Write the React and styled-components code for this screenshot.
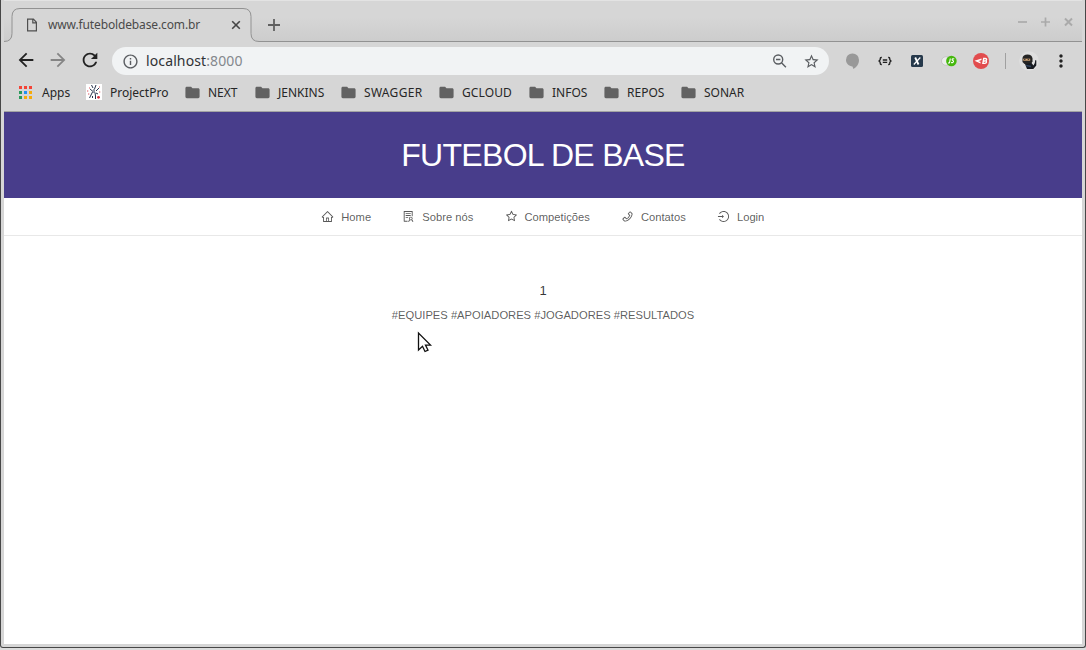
import React from 'react';
import styled, { createGlobalStyle } from 'styled-components';
import {
  AiOutlineHome,
  AiOutlineSolution,
  AiOutlineStar,
  AiOutlinePhone,
  AiOutlineLogin,
} from 'react-icons/ai';
import {
  MdArrowBack,
  MdArrowForward,
  MdRefresh,
  MdInfoOutline,
  MdStarBorder,
  MdMoreVert,
  MdFolder,
} from 'react-icons/md';

const GlobalStyle = createGlobalStyle`
  * { box-sizing: border-box; }
  body { margin: 0; background: #d6d6d6; overflow: hidden; }
  svg { display: block; flex: none; }
`;

const Desktop = styled.div`
  width: 1086px;
  height: 650px;
  background: #dcdcdc;
`;

const Window = styled.div`
  position: relative;
  display: flex;
  flex-direction: column;
  height: 648px;
  padding: 0 3px 3px;
  border: solid #474747;
  border-width: 0 1px 1px;
  border-radius: 0 0 3px 3px;
  background: #d6d6d6;
  font-family: 'Noto Sans', sans-serif;
`;

const TabStrip = styled.div`
  display: flex;
  position: relative;
  height: 42px;
  border-top: 1px solid #e3e3e3;
  background: linear-gradient(#d6d6d6 40%, #cccccc);
`;

const TabOutline = styled.svg`
  position: absolute;
  left: 0;
  top: 0;
`;

const Tab = styled.div`
  position: relative;
  display: flex;
  align-items: center;
  width: 239px;
  height: 34px;
  margin: 7px 0 0 8px;
  padding: 0 10px 0 13px;
  color: #4a4a4a;
  font-size: 12px;
  letter-spacing: -0.13px;
`;

const TabTitle = styled.span`
  flex: 1;
  margin-left: 9px;
  line-height: 16px;
`;

const NewTab = styled.div`
  position: relative;
  margin: 18px 0 0 17px;
`;

const WindowButtons = styled.div`
  position: relative;
  display: flex;
  gap: 14px;
  margin: 16px 9px 0 auto;
`;

const Toolbar = styled.div`
  display: flex;
  align-items: center;
  height: 38px;
  padding-left: 11px;
`;

const NavButtons = styled.div`
  display: flex;
  flex: none;
  gap: 10px;
  width: 97px;
  margin-bottom: 2px;
`;

const AddressBar = styled.div`
  display: flex;
  flex: none;
  align-items: center;
  width: 717px;
  height: 28px;
  padding: 0 9.5px;
  border-radius: 14px;
  background: #f1f3f4;
  color: #5a5d61;
`;

const Url = styled.span`
  flex: 1;
  margin-left: 7.5px;
  color: #303235;
  font-size: 14px;
  line-height: 20px;
  letter-spacing: 0.12px;
`;

const Port = styled.span`
  color: #84888d;
`;

const AddressActions = styled.div`
  display: flex;
  align-items: center;
  gap: 15px;
`;

const Extensions = styled.div`
  display: flex;
  flex: none;
  align-items: center;
  gap: 16px;
  margin-left: 16px;
`;

const Separator = styled.div`
  flex: none;
  width: 1px;
  height: 16px;
  margin: 0 13px 0 16px;
  background: #a0a0a0;
`;

const Menu = styled.div`
  margin: 0 0 1px 11.5px;
`;

const Bookmarks = styled.div`
  display: flex;
  align-items: center;
  height: 32px;
  padding: 0 0 7px 14px;
  border-bottom: 1px solid #a3a3a3;
  color: #262626;
  font-size: 12px;
`;

const Bookmark = styled.div`
  display: flex;
  align-items: center;
  gap: ${(p) => p.$gap}px;
  width: ${(p) => p.$width}px;
  white-space: nowrap;
  letter-spacing: ${(p) => p.$tracking || 0}px;
`;

const Page = styled.main`
  flex: 1;
  background: #fff;
  color: rgba(0, 0, 0, 0.65);
  font-family: 'Liberation Sans', Arial, sans-serif;
  font-size: 11.2px;
`;

const Banner = styled.h1`
  display: flex;
  align-items: center;
  justify-content: center;
  height: 86px;
  margin: 0;
  background: #483d8b;
  color: #fff;
  font-size: 32px;
  font-weight: 400;
  letter-spacing: -0.7px;
`;

const SiteNav = styled.nav`
  display: flex;
  justify-content: center;
  gap: 31.2px;
  height: 38px;
  padding-right: 0.4px;
  border-bottom: 1px solid #e8e8e8;
`;

const NavItem = styled.a`
  display: flex;
  align-items: center;
  gap: 7px;
`;

const NavLabel = styled.span`
  padding-top: 2px;
  line-height: 17px;
`;

const Content = styled.section`
  padding-top: 45px;
  text-align: center;
`;

const Count = styled.div`
  color: rgba(0, 0, 0, 0.78);
  font-size: 13px;
  line-height: 20px;
`;

const Tags = styled.div`
  margin-top: 6px;
  line-height: 17px;
`;

const Cursor = styled.svg`
  position: absolute;
  left: 415px;
  top: 331px;
`;

const folders = [
  ['NEXT', 70],
  ['JENKINS', 86],
  ['SWAGGER', 98, 0.3],
  ['GCLOUD', 90, 0.1],
  ['INFOS', 75],
  ['REPOS', 77],
  ['SONAR', 80],
];

const pages = [
  ['Home', AiOutlineHome],
  ['Sobre nós', AiOutlineSolution],
  ['Competições', AiOutlineStar],
  ['Contatos', AiOutlinePhone],
  ['Login', AiOutlineLogin],
];

const appColors = [
  '#f44336', '#f44336', '#f44336',
  '#2a9a5b', '#2490f0', '#f6ab09',
  '#2a9a5b', '#f6ab09', '#f6ab09',
];

function AppsIcon() {
  return (
    <svg width="14" height="14" shapeRendering="crispEdges">
      {appColors.map((c, i) => (
        <rect key={i} x={(i % 3) * 5 + 1} y={Math.floor(i / 3) * 5 + 0.5} width="3" height="3" fill={c} />
      ))}
    </svg>
  );
}

function ProjectIcon() {
  return (
    <svg width="16" height="16" fill="none">
      <rect width="16" height="16" fill="#fff" />
      <path d="M5.500 1l1.500 3M10 1L8.500 5M4 5l3 2.500M13 4l-3 3M8 5v4M6.500 8L5 11l-1.500 3M9 8.500l.5 3.500v3M10 9l2 1M6.500 12v2" stroke="#27344e" strokeWidth="1" />
      <path d="M1 7h1.300M13 8h1.300M2 10h1.300M13 3h1M3 4h1" stroke="#d63c4a" strokeWidth=".9" />
      <circle cx="12.500" cy="13.300" r="1.400" fill="#d62f3e" />
    </svg>
  );
}

function ZoomOutIcon() {
  return (
    <svg width="16" height="16" fill="none" stroke="currentColor" strokeWidth="1.4">
      <circle cx="6.200" cy="6.500" r="4.500" />
      <path d="M4 6.500h4.400M9.500 9.800l4.400 4.400" />
    </svg>
  );
}

function ExtensionIcons() {
  return (
    <Extensions>
      <svg width="16" height="16">
        <path d="M7.500 .5a6.300 6.300 0 0 0-6.500 6.500c0 3.700 3 6.200 6.500 6.400L8.400 16c3-1.500 5.600-5 5.600-9A6.400 6.400 0 0 0 7.500.5z" fill="#999" />
      </svg>
      <svg width="16" height="16" fill="none" stroke="#202020" strokeWidth="1.3">
        <path d="M4.800 4.500H4.200Q3.200 4.500 3.200 5.700v1l-1.200 1.300 1.200 1.300v1q0 1.200 1 1.200h.6M11.200 4.500h.6q1 0 1 1.200v1l1.200 1.300-1.200 1.300v1q0 1.200-1 1.200h-.6M5.800 7h4.400M5.800 9.300h4.400" />
      </svg>
      <svg width="16" height="16" fill="none">
        <rect x="2" y="2" width="12" height="12" rx="1.500" fill="#26394b" />
        <path d="M6.200 4.500l3.300 7" stroke="#fff" strokeWidth="1.800" />
        <path d="M11.300 4.500l-6.500 7" stroke="#fff" strokeWidth="1.200" />
      </svg>
      <svg width="16" height="16" fill="none">
        <rect x=".5" y="3.800" width="14" height="8.400" rx="4.200" fill="#ececec" stroke="#bbb" strokeWidth=".7" />
        <circle cx="10.400" cy="8" r="5.300" fill="#45b80d" />
        <path d="M9.300 5.500L8.600 9.300q-.2 1-1.600.6M13.200 6q-2-.7-2.100.5c0 1 1.600.9 1.400 2-.2 1.400-1.500 1.200-2.400.9" stroke="#fff" strokeWidth="1.100" />
      </svg>
      <svg width="16" height="16" fill="none">
        <circle cx="8" cy="8" r="8" fill="#e24c4e" />
        <path d="M8.500 5.500L1.500 7.800l6 2.700V8.700H5.200l2.700-.9H5.500l3-.8z" fill="#fff" />
        <path d="M10.700 5.500L9.900 10.400h1.800c2.200 0 2.300-2.400.5-2.500 1.800-.2 1.800-2.400.1-2.400zM10 8h2" stroke="#fff" strokeWidth="1.400" />
      </svg>
    </Extensions>
  );
}

function Avatar() {
  return (
    <svg width="20" height="20" fill="none">
      <circle cx="10" cy="10" r="9.800" fill="#dfdfdf" />
      <path d="M3.500 7Q4 3.500 8.500 3.500t5 4v3l-1.500 2.500H5.500L3.500 11z" fill="#252525" />
      <path d="M4.200 7.700h7v2h-7z" fill="#d9a977" />
      <path d="M5 8.500h1.500M8.700 8.500h1.500" stroke="#222" strokeWidth=".8" />
      <path d="M6 13l6.500-1 2 2.500 1.300-2.500.5-3 1 .5v5l-3 3.500H8z" fill="#171a20" />
      <path d="M7 14.500l5 1" stroke="#32445f" strokeWidth="1.500" />
    </svg>
  );
}

export default function App() {
  return (
    <Desktop>
      <GlobalStyle />
      <Window>
        <TabStrip>
          <TabOutline width="1078" height="41" fill="none">
            <path d="M0 40.500h1q7-.5 7-8V15.500q0-8 8-8h223q8 0 8 8v17q0 8 8 8V42H0z" fill="#d6d6d6" />
            <path d="M0 40.500q8 0 8-8v-17q0-8 8-8h223q8 0 8 8v17q0 8 8 8h823" stroke="#929292" />
          </TabOutline>
          <Tab>
            <svg width="14" height="16" viewBox="0 0 14 16" fill="none" stroke="#505050" strokeWidth="1.2">
              <path d="M2.600 2.100h5.800l3 3.200v8.600H2.600zM7.800 2.100v3.700h3.600" />
            </svg>
            <TabTitle>www.futeboldebase.com.br</TabTitle>
            <svg width="10" height="10" stroke="#454545" strokeWidth="1.6"><path d="M1.200 1.200l7.600 7.600M8.800 1.200l-7.600 7.600" /></svg>
          </Tab>
          <NewTab>
            <svg width="12" height="12" stroke="#606060" strokeWidth="1.8"><path d="M6 0v12M0 6h12" /></svg>
          </NewTab>
          <WindowButtons>
            <svg width="9" height="10" stroke="#aaa" strokeWidth="1.7"><path d="M0 5h9" /></svg>
            <svg width="9" height="10" stroke="#aaa" strokeWidth="1.7"><path d="M0 5h9M4.500 .5v9" /></svg>
            <svg width="9" height="10" stroke="#aaa" strokeWidth="2"><path d="M1 1.500l7 7M8 1.500l-7 7" /></svg>
          </WindowButtons>
        </TabStrip>
        <Toolbar>
          <NavButtons>
            <MdArrowBack size={22} color="#222" />
            <MdArrowForward size={22} color="#858585" />
            <MdRefresh size={22} color="#222" />
          </NavButtons>
          <AddressBar>
            <MdInfoOutline size={17} />
            <Url>localhost<Port>:8000</Port></Url>
            <AddressActions>
              <ZoomOutIcon />
              <MdStarBorder size={17} />
            </AddressActions>
          </AddressBar>
          <ExtensionIcons />
          <Separator />
          <Avatar />
          <Menu><MdMoreVert size={20} color="#222" /></Menu>
        </Toolbar>
        <Bookmarks>
          <Bookmark $width={68} $gap={10}><AppsIcon />Apps</Bookmark>
          <Bookmark $width={97.500} $gap={8}><ProjectIcon />ProjectPro</Bookmark>
          {folders.map(([name, width, tracking]) => (
            <Bookmark key={name} $width={width} $gap={7.500} $tracking={tracking}>
              <MdFolder size={17} color="#626262" />
              {name}
            </Bookmark>
          ))}
        </Bookmarks>
        <Page>
          <Banner>FUTEBOL DE BASE</Banner>
          <SiteNav>
            {pages.map(([name, Icon]) => (
              <NavItem key={name}>
                <Icon size={13} />
                <NavLabel>{name}</NavLabel>
              </NavItem>
            ))}
          </SiteNav>
          <Content>
            <Count>1</Count>
            <Tags>#EQUIPES #APOIADORES #JOGADORES #RESULTADOS</Tags>
          </Content>
        </Page>
        <Cursor width="18" height="24">
          <path d="M2.500 2v17l4-3.700 2.500 5.200 3-1.400-2.500-5h5z" fill="#fff" stroke="#111" strokeWidth="1.300" />
        </Cursor>
      </Window>
    </Desktop>
  );
}
